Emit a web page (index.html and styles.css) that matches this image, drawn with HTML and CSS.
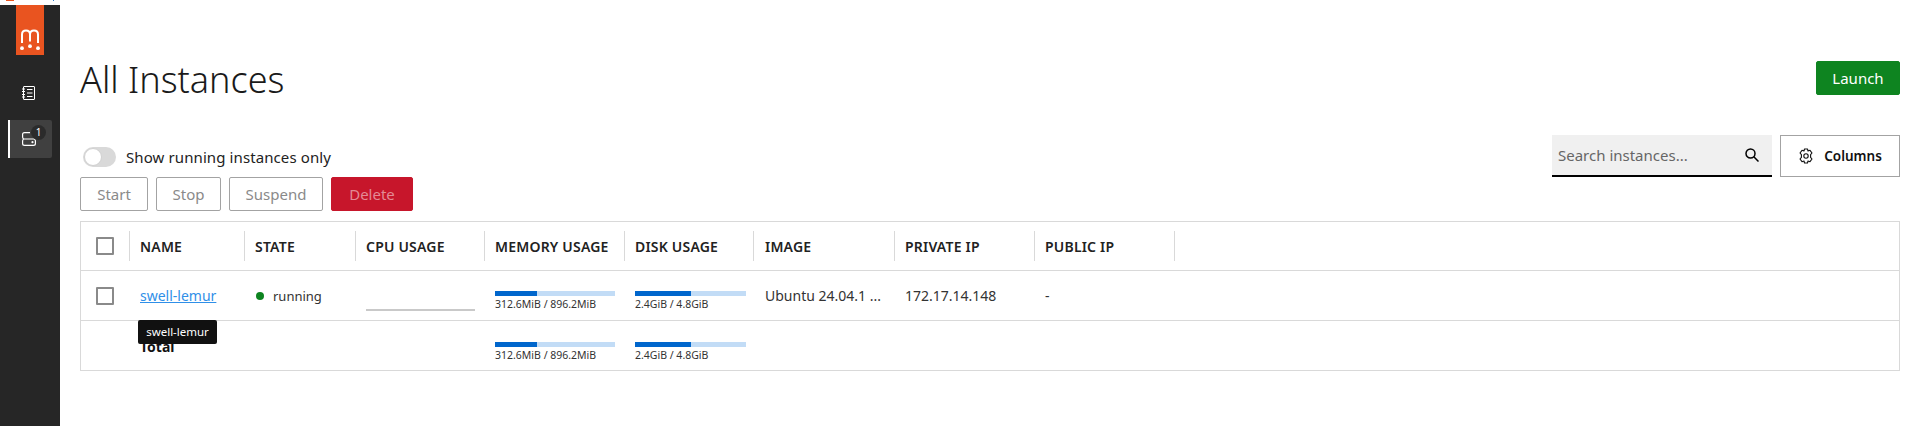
FILE: index.html
```html
<!DOCTYPE html>
<html lang="en">
<head>
    <meta charset="UTF-8">
    <meta name="viewport" content="width=device-width, initial-scale=1.0">
    <title>All Instances</title>
    <link rel="stylesheet" href="styles.css">
</head>
<body>
    <div class="topstrip">
        <span class="strip-orange"></span>
        <span class="strip-blue"></span>
    </div>
    <div class="app">
        <nav class="sidebar">
            <div class="logo">
                <svg width="20" height="22" viewBox="0 0 20 22" fill="none" stroke="#ffffff" stroke-width="2">
                    <path d="M2 14V5.500C2 3 3.500 1.500 6 1.500C8.500 1.500 10 3 10 5.500V12.500M10 5.500C10 3 11.500 1.500 14 1.500C16.500 1.500 18 3 18 5.500V14"/>
                    <circle cx="2" cy="19.200" r="1.900" fill="#ffffff" stroke="none"/>
                    <circle cx="10" cy="17.200" r="1.900" fill="#ffffff" stroke="none"/>
                    <circle cx="18" cy="19.200" r="1.900" fill="#ffffff" stroke="none"/>
                </svg>
            </div>
            <a class="nav-item">
                <svg width="13" height="14" viewBox="0 0 13 14" fill="none" stroke="#ffffff" stroke-width="1">
                    <rect x="1.500" y="0.500" width="11" height="13" rx="0.500"/>
                    <path d="M0 3H3M0 5.500H3M0 8.500H3M0 11H3M5 3.500H10.500M5 7H10.500M5 10.500H10.500"/>
                </svg>
            </a>
            <a class="nav-item active">
                <svg width="14" height="14" viewBox="0 0 14 14" fill="none" stroke="#ffffff" stroke-width="1.200">
                    <path d="M8 0.600H2.500C1.300 0.600 0.600 1.300 0.600 2.500V5C0.600 6 1 6.600 1.800 7C1 7.400 0.600 8 0.600 9V11.500C0.600 12.700 1.300 13.400 2.500 13.400H11.500C12.700 13.400 13.400 12.700 13.400 11.500V9C13.400 7.800 12.700 7 11.500 7H1.800"/>
                    <circle cx="10.500" cy="10.200" r="1.100" fill="#ffffff" stroke="none"/>
                </svg>
                <span class="badge">1</span>
            </a>
        </nav>
        <main class="content">
            <header class="page-head">
                <h1>All Instances</h1>
                <button class="btn btn-launch">Launch</button>
            </header>
            <div class="controls">
                <div class="controls-left">
                    <label class="toggle-row">
                        <span class="toggle"><span class="knob"></span></span>
                        Show running instances only
                    </label>
                    <div class="actions">
                        <button class="btn btn-plain btn-start">Start</button>
                        <button class="btn btn-plain btn-stop">Stop</button>
                        <button class="btn btn-plain btn-suspend">Suspend</button>
                        <button class="btn btn-delete">Delete</button>
                    </div>
                </div>
                <div class="controls-right">
                    <div class="search">
                        <span class="search-text">Search instances...</span>
                        <svg width="14" height="14" viewBox="0 0 14 14" fill="none" stroke="#000000" stroke-width="1.500">
                            <circle cx="5.500" cy="5.500" r="4.500"/>
                            <path d="M8.800 8.800L13.500 13.500"/>
                        </svg>
                    </div>
                    <button class="btn btn-columns">
                        <svg width="16" height="16" viewBox="0 0 16 16" fill="none" stroke="#111111" stroke-width="1.100">
                            <path d="M6.500 1H9.500L10 3L12 2.300L14 5L12.600 6.600V9.400L14 11L12 13.700L10 13L9.500 15H6.500L6 13L4 13.700L2 11L3.400 9.400V6.600L2 5L4 2.300L6 3Z" stroke-linejoin="round"/>
                            <circle cx="8" cy="8" r="2.200"/>
                        </svg>
                        Columns
                    </button>
                </div>
            </div>
            <div class="table-wrap">
                <div class="row head-row">
                    <div class="cell check-cell"><span class="checkbox"></span></div>
                    <div class="cell name-col">NAME</div>
                    <div class="cell state-col">STATE</div>
                    <div class="cell cpu-col">CPU USAGE</div>
                    <div class="cell mem-col">MEMORY USAGE</div>
                    <div class="cell disk-col">DISK USAGE</div>
                    <div class="cell image-col">IMAGE</div>
                    <div class="cell ip-col">PRIVATE IP</div>
                    <div class="cell ip-col">PUBLIC IP</div>
                </div>
                <div class="row body-row">
                    <div class="cell check-cell"><span class="checkbox"></span></div>
                    <div class="cell name-col name-cell">
                        <a class="name-link">swell-lemur</a>
                        <span class="tooltip">swell-lemur</span>
                    </div>
                    <div class="cell state-col state-cell"><span class="dot"></span>running</div>
                    <div class="cell cpu-col"><span class="cpu-line"></span></div>
                    <div class="cell mem-col usage">
                        <div class="bar mem-bar"><span class="fill" style="width: 35%"></span></div>
                        <div class="usage-text">312.6MiB / 896.2MiB</div>
                    </div>
                    <div class="cell disk-col usage">
                        <div class="bar disk-bar"><span class="fill" style="width: 50%"></span></div>
                        <div class="usage-text">2.4GiB / 4.8GiB</div>
                    </div>
                    <div class="cell image-col">Ubuntu 24.04.1 ...</div>
                    <div class="cell ip-col">172.17.14.148</div>
                    <div class="cell ip-col">-</div>
                </div>
                <div class="row total-row">
                    <div class="cell check-cell"></div>
                    <div class="cell name-col total-label">Total</div>
                    <div class="cell state-col"></div>
                    <div class="cell cpu-col"></div>
                    <div class="cell mem-col usage">
                        <div class="bar mem-bar"><span class="fill" style="width: 35%"></span></div>
                        <div class="usage-text">312.6MiB / 896.2MiB</div>
                    </div>
                    <div class="cell disk-col usage">
                        <div class="bar disk-bar"><span class="fill" style="width: 50%"></span></div>
                        <div class="usage-text">2.4GiB / 4.8GiB</div>
                    </div>
                </div>
            </div>
        </main>
    </div>
</body>
</html>
```

FILE: styles.css
```css
* {
    box-sizing: border-box;
}
html, body {
    margin: 0;
    padding: 0;
    height: 100%;
    overflow: hidden;
}
body {
    font-family: "Noto Sans", "Open Sans", sans-serif;
    background-color: #ffffff;
    color: #111111;
    font-size: 15px;
}
.topstrip {
    height: 5px;
    display: flex;
}
.strip-orange {
    width: 8px;
    height: 1px;
    margin-left: 6px;
    background-color: #e95420;
}
.strip-blue {
    width: 1px;
    height: 1px;
    margin-left: 39px;
    background-color: #2f7fd0;
}
.app {
    display: flex;
    height: 421px;
}
.sidebar {
    width: 60px;
    background-color: #262626;
    display: flex;
    flex-direction: column;
    align-items: center;
    flex-shrink: 0;
}
.logo {
    width: 28px;
    height: 50px;
    background-color: #e95420;
    display: flex;
    justify-content: center;
    align-items: flex-end;
    padding-bottom: 4px;
}
.nav-item {
    width: 44px;
    height: 38px;
    padding-right: 4px;
    display: flex;
    align-items: center;
    justify-content: center;
    position: relative;
    border-radius: 2px;
}
.logo + .nav-item {
    margin-top: 19px;
    margin-bottom: 8px;
}
.nav-item.active {
    background-color: #404040;
    border-left: 2px solid #ffffff;
    border-radius: 0 2px 2px 0;
}
.badge {
    position: absolute;
    top: 5px;
    right: 6px;
    width: 15px;
    height: 15px;
    border-radius: 50%;
    background-color: #2b2b2b;
    color: #ffffff;
    font-size: 10px;
    line-height: 15px;
    text-align: center;
}
.content {
    flex: 1;
    padding: 0 13px 0 20px;
    min-width: 0;
}
.page-head {
    display: flex;
    justify-content: space-between;
    align-items: flex-start;
    height: 76px;
    padding-top: 51px;
}
h1 {
    margin: -1px 0 0;
    font-size: 36px;
    font-weight: 300;
    line-height: 50px;
    color: #1a1a1a;
}
.btn {
    font-family: inherit;
    font-size: 15px;
    border-radius: 2px;
    height: 34px;
    padding: 0;
    cursor: pointer;
}
.btn-launch {
    background-color: #0e8420;
    border: 1px solid #0e8420;
    color: #ffffff;
    width: 84px;
    margin-top: 5px;
}
.controls {
    display: flex;
    justify-content: space-between;
    margin-top: 65px;
    height: 80px;
}
.toggle-row {
    display: flex;
    align-items: center;
    gap: 10px;
    height: 20px;
    margin-left: 3px;
    margin-top: 1px;
    color: #222222;
    letter-spacing: 0.1px;
}
.toggle {
    width: 33px;
    height: 20px;
    border-radius: 10px;
    background-color: #d9d9d9;
    display: block;
}
.knob {
    display: block;
    width: 18px;
    height: 18px;
    margin: 1px;
    border-radius: 50%;
    background-color: #ffffff;
    border: 1px solid #d0d0d0;
}
.actions {
    display: flex;
    gap: 8px;
    margin-top: 10px;
}
.btn-plain {
    background-color: #ffffff;
    border: 1px solid #a3a3a3;
    color: #8a8a8a;
}
.btn-start { width: 68px; }
.btn-stop { width: 65px; }
.btn-suspend { width: 94px; }
.btn-delete {
    width: 82px;
    background-color: #c7162b;
    border: 1px solid #c7162b;
    color: #e38a95;
}
.controls-right {
    display: flex;
    gap: 8px;
    align-items: flex-start;
    margin-top: -11px;
}
.search {
    width: 220px;
    height: 42px;
    background-color: #f0f0f0;
    border-bottom: 2px solid #000000;
    display: flex;
    align-items: center;
    justify-content: space-between;
    padding: 0 13px 0 6px;
    color: #666666;
}
.btn-columns {
    width: 120px;
    height: 42px;
    background-color: #ffffff;
    border: 1px solid #a3a3a3;
    border-radius: 0;
    color: #111111;
    font-size: 13.5px;
    font-weight: 600;
    display: flex;
    align-items: center;
    justify-content: center;
    gap: 10px;
    padding: 0;
}
.table-wrap {
    border: 1px solid #d9d9d9;
    height: 150px;
    margin-top: -5px;
}
.row {
    display: flex;
    height: 50px;
    border-bottom: 1px solid #d9d9d9;
}
.head-row {
    height: 49px;
}
.total-row {
    border-bottom: 0;
    height: 49px;
}
.cell {
    padding: 0 10px;
    display: flex;
    align-items: center;
    flex-shrink: 0;
}
.check-cell {
    width: 49px;
    padding: 0 0 0 15px;
}
.name-col { width: 115px; }
.state-col { width: 111px; }
.cpu-col { width: 129px; }
.mem-col { width: 140px; }
.disk-col { width: 129px; }
.image-col { width: 141px; padding-left: 11px; }
.ip-col { width: 140px; }
.head-row .cell {
    font-size: 14px;
    font-weight: 600;
    letter-spacing: 0.2px;
    color: #222222;
    position: relative;
}
/* small dividers between the header cells */
.head-row .cell::after {
    content: "";
    position: absolute;
    right: 0;
    top: 9px;
    height: 30px;
    border-right: 1px solid #d9d9d9;
}
.checkbox {
    display: block;
    width: 18px;
    height: 18px;
    border: 2px solid #8a8a8a;
    border-radius: 1px;
}
.body-row .cell {
    font-size: 14px;
    color: #333333;
}
.body-row .state-cell {
    font-size: 13px;
}
.name-cell {
    position: relative;
}
.name-link {
    color: #2f8fe8;
    text-decoration: underline;
}
.tooltip {
    position: absolute;
    left: 8px;
    top: 49px;
    width: 79px;
    height: 24px;
    background-color: #111111;
    color: #ffffff;
    font-size: 11.5px;
    line-height: 24px;
    text-align: center;
    border-radius: 2px;
    z-index: 2;
}
.dot {
    width: 8px;
    height: 8px;
    border-radius: 50%;
    background-color: #0e8420;
    margin: 0 9px 0 1px;
}
.cpu-line {
    display: block;
    width: 110px;
    height: 2px;
    margin-top: 28px;
    background-color: #c9c9c9;
}
.usage {
    flex-direction: column;
    align-items: flex-start;
    justify-content: flex-start;
    padding-top: 20px;
}
.total-row .usage {
    padding-top: 21px;
}
.bar {
    height: 5px;
    flex-shrink: 0;
    background-color: #c2dcf6;
}
.mem-bar { width: 120px; }
.disk-bar { width: 111px; }
.fill {
    display: block;
    height: 100%;
    background-color: #0066cc;
}
.usage-text {
    font-size: 10.5px;
    line-height: 13px;
    margin-top: 2px;
    color: #333333;
}
.total-label {
    font-size: 14px;
    font-weight: 700;
    padding-top: 2px;
}
```
